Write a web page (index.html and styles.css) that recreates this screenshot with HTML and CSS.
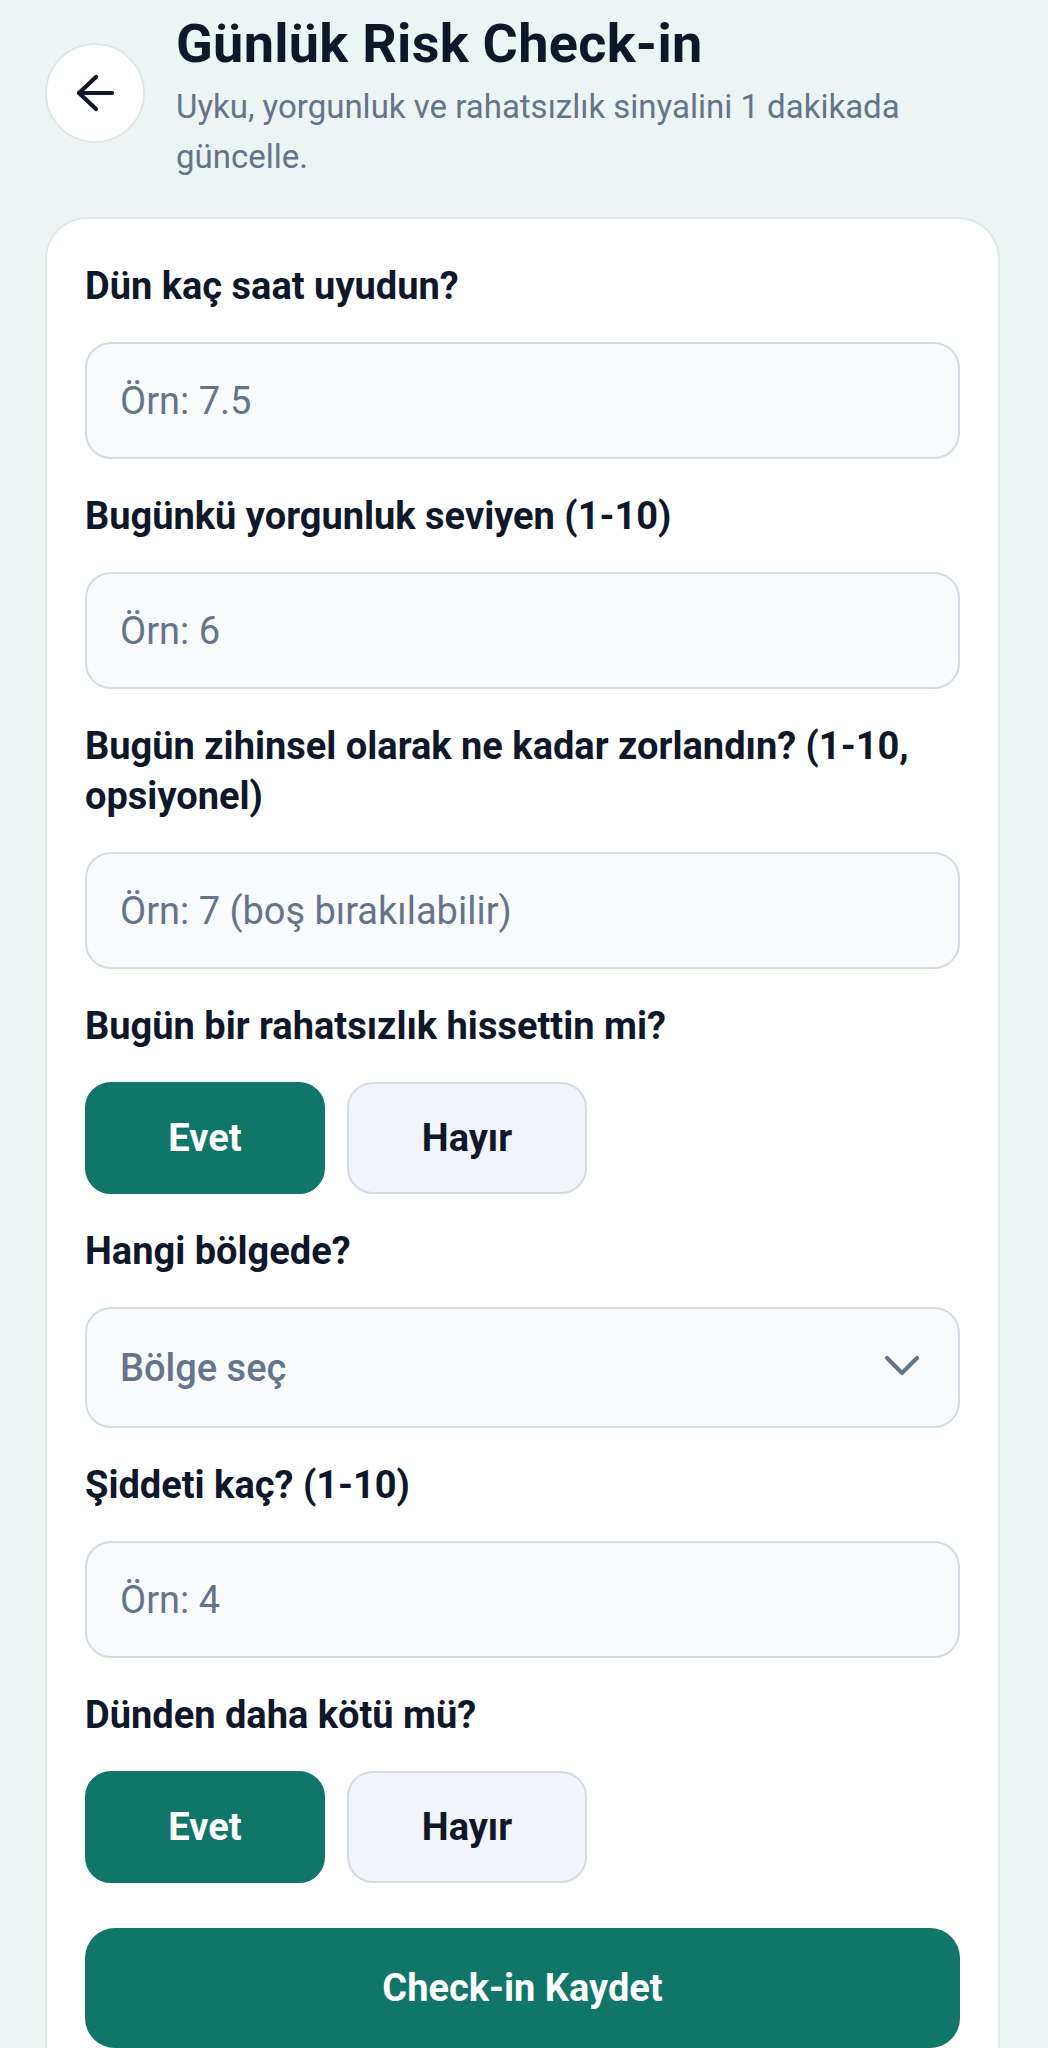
FILE: index.html
```html
<!DOCTYPE html>
<html lang="tr">
<head>
    <meta charset="UTF-8">
    <meta name="viewport" content="width=device-width, initial-scale=1.0">
    <title>Günlük Risk Check-in</title>
    <link rel="stylesheet" href="styles.css">
</head>
<body>
    <div class="page">
        <!-- Üst kısım -->
        <div class="header">
            <button class="back-btn" type="button" aria-label="Geri">
                <svg width="42" height="40" viewBox="0 0 42 40" fill="none" stroke="#0f172a" stroke-width="4.2" stroke-linecap="round" stroke-linejoin="round">
                    <path d="M5 20 H38"/>
                    <path d="M22 4 L5 20 L22 36"/>
                </svg>
            </button>
            <div class="header-text">
                <h1 class="title">Günlük Risk Check-in</h1>
                <p class="subtitle">Uyku, yorgunluk ve rahatsızlık sinyalini 1 dakikada güncelle.</p>
            </div>
        </div>

        <!-- Form kartı -->
        <form class="card" id="checkinForm">
            <div class="field">
                <label class="label" for="sleep">Dün kaç saat uyudun?</label>
                <input class="input" type="text" id="sleep" placeholder="Örn: 7.5">
            </div>

            <div class="field">
                <label class="label" for="fatigue">Bugünkü yorgunluk seviyen (1-10)</label>
                <input class="input" type="text" id="fatigue" placeholder="Örn: 6">
            </div>

            <div class="field">
                <label class="label" for="mental">Bugün zihinsel olarak ne kadar zorlandın? (1-10, opsiyonel)</label>
                <input class="input" type="text" id="mental" placeholder="Örn: 7 (boş bırakılabilir)">
            </div>

            <div class="field">
                <span class="label">Bugün bir rahatsızlık hissettin mi?</span>
                <div class="choices">
                    <button type="button" class="choice active">Evet</button>
                    <button type="button" class="choice">Hayır</button>
                </div>
            </div>

            <div class="field">
                <label class="label" for="region">Hangi bölgede?</label>
                <div class="select-wrap">
                    <select class="input select" id="region">
                        <option value="">Bölge seç</option>
                        <option value="bel">Bel</option>
                        <option value="boyun">Boyun</option>
                        <option value="diz">Diz</option>
                        <option value="omuz">Omuz</option>
                    </select>
                    <svg class="chevron" width="36" height="22" viewBox="0 0 36 22" fill="none" stroke="#64748b" stroke-width="4.2" stroke-linecap="round" stroke-linejoin="round">
                        <path d="M3 3 L18 18 L33 3"/>
                    </svg>
                </div>
            </div>

            <div class="field">
                <label class="label" for="severity">Şiddeti kaç? (1-10)</label>
                <input class="input" type="text" id="severity" placeholder="Örn: 4">
            </div>

            <div class="field">
                <span class="label">Dünden daha kötü mü?</span>
                <div class="choices">
                    <button type="button" class="choice active">Evet</button>
                    <button type="button" class="choice">Hayır</button>
                </div>
            </div>

            <button type="submit" class="submit">Check-in Kaydet</button>
        </form>
    </div>
</body>
</html>
```

FILE: styles.css
```css
body {
    margin: 0;
    background-color: #ecf5f3;
    font-family: Roboto, "Noto Sans", sans-serif;
    color: #0f172a;
}
.page {
    padding: 13px 48px 40px 45px;
}
.header {
    display: flex;
    align-items: flex-start;
    gap: 31px;
}
.back-btn {
    flex-shrink: 0;
    width: 100px;
    height: 100px;
    margin-top: 30px;
    padding: 0;
    border-radius: 50%;
    border: 2px solid #dde8e5;
    background-color: #fff;
    display: flex;
    align-items: center;
    justify-content: center;
}
.header-text {
    flex: 1;
}
.title {
    margin: 0;
    font-size: 54px;
    line-height: 62px;
    font-weight: 700;
    letter-spacing: 0.3px;
}
.subtitle {
    margin: 7px 0 0;
    font-size: 33px;
    line-height: 50px;
    color: #64748b;
}
.card {
    display: block;
    margin-top: 35px;
    background-color: #fff;
    border: 2px solid #dce9e5;
    border-radius: 42px;
    padding: 42px 38px 40px;
}
.field {
    margin-bottom: 32px;
}
.label {
    display: block;
    font-size: 38px;
    line-height: 50px;
    font-weight: 700;
    margin-bottom: 31px;
}
.input {
    box-sizing: border-box;
    display: block;
    width: 100%;
    height: 117px;
    padding: 0 33px;
    border: 2px solid #d3dbe4;
    border-radius: 26px;
    background-color: #f8fafc;
    font-family: Roboto, "Noto Sans", sans-serif;
    font-size: 38px;
    color: #0f172a;
    outline: none;
}
.input::placeholder {
    color: #64748b;
}
.select-wrap {
    position: relative;
}
.select {
    height: 121px;
    appearance: none;
    -webkit-appearance: none;
    font-weight: 500;
    color: #64748b;
}
.chevron {
    position: absolute;
    right: 40px;
    top: 48px;
    pointer-events: none;
}
.choices {
    display: flex;
    gap: 22px;
}
.choice {
    width: 240px;
    height: 112px;
    border-radius: 26px;
    border: 2px solid #d3dbe4;
    background-color: #f1f5f9;
    color: #0f172a;
    font-family: Roboto, "Noto Sans", sans-serif;
    font-size: 38px;
    font-weight: 700;
    cursor: pointer;
}
.choice.active {
    background-color: #10766a;
    border-color: #10766a;
    color: #fff;
}
.submit {
    display: block;
    width: 100%;
    height: 120px;
    margin-top: 45px;
    border: none;
    border-radius: 30px;
    background-color: #10766a;
    color: #fff;
    font-family: Roboto, "Noto Sans", sans-serif;
    font-size: 38px;
    font-weight: 700;
    cursor: pointer;
}
```
